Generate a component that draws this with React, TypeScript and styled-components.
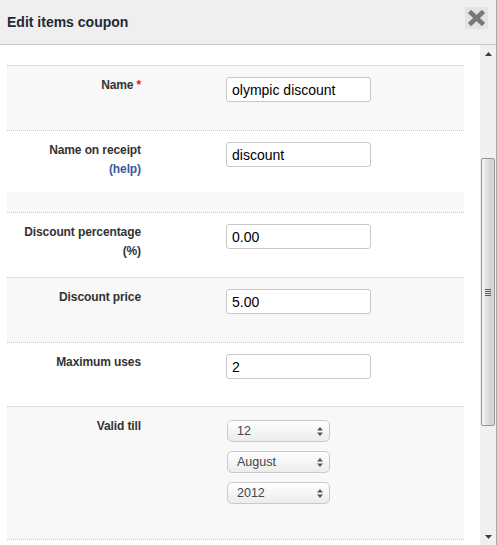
import React from 'react';
import styled, { createGlobalStyle } from 'styled-components';

const GlobalStyle = createGlobalStyle`
  html, body {
    margin: 0;
    padding: 0;
    background: #fff;
    font-family: "Liberation Sans", Arial, sans-serif;
  }
`;

const Dialog = styled.div`
  width: 497px;
  height: 545px;
  box-sizing: border-box;
  border-right: 1px solid #a9a9a9;
  display: flex;
  flex-direction: column;
  overflow: hidden;
  background: #fff;
`;

const Header = styled.div`
  height: 45px;
  box-sizing: border-box;
  flex-shrink: 0;
  background: #efefef;
  border-bottom: 1px solid #c8c8c8;
  display: flex;
  align-items: center;
  justify-content: space-between;
  padding: 0 8px 0 7px;
`;

const Title = styled.h1`
  margin: 0;
  font-size: 14px;
  line-height: 16px;
  font-weight: bold;
  color: #222a33;
`;

const CloseButton = styled.button`
  align-self: flex-start;
  margin-top: 7px;
  width: 23px;
  height: 22px;
  padding: 0;
  border: none;
  background: #e3e3e3;
  display: flex;
  align-items: center;
  justify-content: center;
  cursor: pointer;
`;

const Body = styled.div`
  flex: 1;
  min-height: 0;
  display: flex;
`;

const Content = styled.div`
  flex: 1;
  min-width: 0;
  overflow: hidden;
  padding: 20px 16px 0 7px;
`;

const Row = styled.div<{ $h: number; $gray?: boolean; $plain?: boolean }>`
  height: ${({ $h }) => $h}px;
  box-sizing: border-box;
  border-top: ${({ $plain }) => ($plain ? 'none' : '1px dotted #c8c8c8')};
  background: ${({ $gray }) => ($gray ? '#f8f8f8' : '#fff')};
  display: grid;
  grid-template-columns: 134px 1fr;
  column-gap: 85px;
  align-items: start;
  padding-top: 11px;
`;

const Label = styled.label`
  margin-top: -1px;
  text-align: right;
  font-size: 12px;
  line-height: 19px;
  font-weight: bold;
  color: #333;
  letter-spacing: -0.1px;
`;

const Required = styled.span`
  color: #e31b1b;
  margin-left: 3px;
`;

const Help = styled.a`
  display: block;
  color: #36599a;
  text-decoration: none;
`;

const Hint = styled.span`
  display: block;
`;

const TextInput = styled.input`
  width: 145px;
  height: 25px;
  box-sizing: border-box;
  border: 1px solid #c8c8c8;
  border-radius: 3px;
  padding: 0 5px;
  font-family: "Liberation Sans", Arial, sans-serif;
  font-size: 14px;
  color: #000;
  background: #fff;
  outline: none;
`;

const SelectGroup = styled.div`
  display: flex;
  flex-direction: column;
  gap: 9px;
  padding: 2px 0 0 1px;
`;

const SelectWrap = styled.div`
  position: relative;
  width: 103px;
  height: 22px;
`;

const Select = styled.select`
  appearance: none;
  -webkit-appearance: none;
  width: 103px;
  height: 22px;
  box-sizing: border-box;
  border: 1px solid #cacaca;
  border-radius: 5px;
  padding: 0 0 0 9px;
  background: linear-gradient(#ffffff, #ececec);
  font-family: "Liberation Sans", Arial, sans-serif;
  font-size: 12.5px;
  color: #444;
  outline: none;
`;

const SelectArrows = styled.svg`
  position: absolute;
  top: 7px;
  right: 7px;
  pointer-events: none;
`;

const ScrollTrack = styled.div`
  width: 16px;
  flex-shrink: 0;
  background: #f0f0f0;
  display: flex;
  flex-direction: column;
`;

const ScrollButton = styled.div`
  height: 17px;
  display: flex;
  align-items: center;
  justify-content: center;
  padding-left: 1px;
`;

const Thumb = styled.div<{ $top: number; $h: number }>`
  margin: ${({ $top }) => $top}px 1px 0 1px;
  height: ${({ $h }) => $h}px;
  box-sizing: border-box;
  border: 1px solid #959595;
  border-radius: 2px;
  background: linear-gradient(to right, #f6f6f6, #e2e2e2 40%, #d2d2d2 80%, #dcdcdc);
  display: flex;
  align-items: center;
  justify-content: center;
`;

const Grip = styled.div`
  width: 6px;
  height: 7px;
  background: repeating-linear-gradient(#5c5c5c 0 1px, transparent 1px 2px);
`;

const TrackFill = styled.div`
  flex: 1;
`;

const SelectBox = ({ value, options }: { value: string; options: string[] }) => (
  <SelectWrap>
    <Select defaultValue={value}>
      {options.map((o) => (
        <option key={o}>{o}</option>
      ))}
    </Select>
    <SelectArrows width="6" height="9" viewBox="0 0 6 9">
      <path d="M0 3.5 L3 0 L6 3.5 Z" fill="#555" />
      <path d="M0 5.5 L3 9 L6 5.5 Z" fill="#555" />
    </SelectArrows>
  </SelectWrap>
);

const months = [
  'January', 'February', 'March', 'April', 'May', 'June',
  'July', 'August', 'September', 'October', 'November', 'December',
];

export default function App() {
  return (
    <>
      <GlobalStyle />
      <Dialog>
        <Header>
          <Title>Edit items coupon</Title>
          <CloseButton aria-label="Close">
            <svg width="17" height="16" viewBox="0 0 17 16">
              <path d="M1.5 1.5 L15.5 14.5 M15.5 1.5 L1.5 14.5" stroke="#787878" strokeWidth="4.6" />
            </svg>
          </CloseButton>
        </Header>
        <Body>
          <Content>
            <Row $h={65} $gray>
              <Label>
                Name<Required>*</Required>
              </Label>
              <div>
                <TextInput defaultValue="olympic discount" />
              </div>
            </Row>
            <Row $h={62}>
              <Label>
                Name on receipt
                <Help href="#">(help)</Help>
              </Label>
              <div>
                <TextInput defaultValue="discount" />
              </div>
            </Row>
            <Row $h={20} $gray $plain />
            <Row $h={65}>
              <Label>
                Discount percentage
                <Hint>(%)</Hint>
              </Label>
              <div>
                <TextInput defaultValue="0.00" />
              </div>
            </Row>
            <Row $h={65} $gray>
              <Label>Discount price</Label>
              <div>
                <TextInput defaultValue="5.00" />
              </div>
            </Row>
            <Row $h={64}>
              <Label>Maximum uses</Label>
              <div>
                <TextInput defaultValue="2" />
              </div>
            </Row>
            <Row $h={133} $gray>
              <Label>Valid till</Label>
              <SelectGroup>
                <SelectBox value="12" options={Array.from({ length: 31 }, (_, i) => String(i + 1))} />
                <SelectBox value="August" options={months} />
                <SelectBox value="2012" options={['2012', '2013', '2014', '2015']} />
              </SelectGroup>
            </Row>
            <Row $h={60} />
          </Content>
          <ScrollTrack>
            <ScrollButton>
              <svg width="7" height="4" viewBox="0 0 7 4">
                <path d="M0 4 L3.5 0 L7 4 Z" fill="#3c3c3c" />
              </svg>
            </ScrollButton>
            <Thumb $top={96} $h={268}>
              <Grip />
            </Thumb>
            <TrackFill />
            <ScrollButton>
              <svg width="7" height="4" viewBox="0 0 7 4">
                <path d="M0 0 L3.5 4 L7 0 Z" fill="#3c3c3c" />
              </svg>
            </ScrollButton>
          </ScrollTrack>
        </Body>
      </Dialog>
    </>
  );
}
